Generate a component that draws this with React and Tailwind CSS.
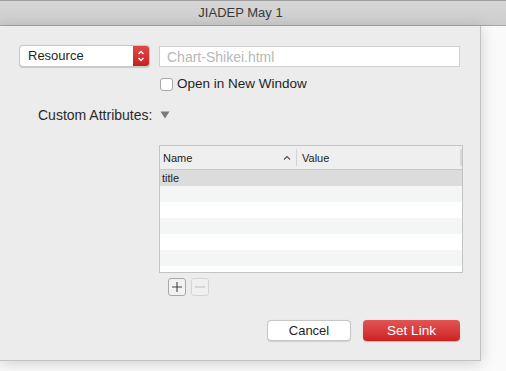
import React from "react";

export default function App() {
  const rows = [
    { bg: "bg-[#dcdcdc]", text: "title" },
    { bg: "bg-[#f4f5f5]" },
    { bg: "bg-white" },
    { bg: "bg-[#f4f5f5]" },
    { bg: "bg-white" },
    { bg: "bg-[#f4f5f5]" },
  ];
  return (
    <div
      className="w-[506px] h-[371px] bg-[#fafafa] overflow-hidden relative text-[13px] text-[#222]"
      style={{ fontFamily: '"Liberation Sans", Arial, sans-serif' }}
    >
      <div className="h-[26px] border-t border-[#9f9f9f] border-b border-b-[#a6a6a6] bg-gradient-to-b from-[#d6d6d6] to-[#cdcdcd] flex items-center">
        <div className="w-[481px] text-center text-[13px] leading-[16px] text-[#3a3a3a]">JIADEP May 1</div>
      </div>
      <div className="w-[481px] h-[335px] bg-[#ececec] border-r border-b border-[#c2c2c2] shadow-[0_2px_14px_rgba(0,0,0,0.18)] flex flex-col relative">
        <div className="flex items-start pl-[19px] pt-[19px]">
          <div className="w-[131px] h-[22px] rounded-[4px] bg-white border border-[#c8c8c8] flex items-center overflow-hidden shadow-[0_0.5px_1px_rgba(0,0,0,0.15)]">
            <span className="flex-1 pl-[8px] text-[13px] leading-[16px] text-[#1f1f1f]">Resource</span>
            <div className="w-[16px] h-full bg-gradient-to-b from-[#e04848] to-[#c51f1f] flex items-center justify-center">
              <svg width="8" height="14" viewBox="0 0 8 14">
                <path d="M1.5 5 L4 2.5 L6.5 5" stroke="white" strokeWidth="1.3" fill="none" />
                <path d="M1.5 9 L4 11.5 L6.5 9" stroke="white" strokeWidth="1.3" fill="none" />
              </svg>
            </div>
          </div>
          <div className="ml-[9px] mt-[1px] w-[301px] h-[21px] bg-white border border-[#d0d0d0] flex items-center pl-[7px] text-[#b8b8b8] text-[14px] leading-[16px]">
            Chart-Shikei.html
          </div>
        </div>
        <div className="flex items-center pl-[160px] mt-[10px] h-[14px]">
          <div className="w-[13px] h-[13px] rounded-[3px] bg-white border border-[#a8a8a8]" />
          <span className="ml-[4px] text-[13.5px] leading-[14px] text-[#1f1f1f]">Open in New Window</span>
        </div>
        <div className="flex items-center pl-[38px] mt-[16px] h-[16px]">
          <span className="text-[14px] leading-[16px] text-[#2a2a2a]">Custom Attributes:</span>
          <svg className="ml-[8px]" width="10" height="8" viewBox="0 0 10 8">
            <path d="M0.5 0.5 L9.5 0.5 L5 7.5 Z" fill="#7a7a7a" />
          </svg>
        </div>
        <div className="ml-[159px] mt-[22px] w-[304px] h-[128px] border border-[#c4c4c4] bg-white flex flex-col overflow-hidden">
          <div className="h-[24px] shrink-0 bg-[#efefef] border-b border-[#c8c8c8] flex items-center text-[11px] leading-[14px] text-[#222]">
            <div className="w-[137px] flex items-center pl-[3px] border-r border-[#d4d4d4] h-[17px]">
              <span className="flex-1">Name</span>
              <svg className="mr-[5px]" width="8" height="6" viewBox="0 0 8 6">
                <path d="M1 4.5 L4 1.5 L7 4.5" stroke="#555" strokeWidth="1.2" fill="none" />
              </svg>
            </div>
            <div className="flex-1 pl-[5px] h-[17px] flex items-center border-r-2 border-[#d8d8d8]">Value</div>
          </div>
          {rows.map((r, i) => (
            <div key={i} className={`h-[16px] shrink-0 ${r.bg} flex items-center pl-[2px] text-[11px] leading-[14px] text-[#222]`}>
              {r.text || ""}
            </div>
          ))}
        </div>
        <div className="flex ml-[168px] mt-[5px] gap-[5px]">
          <div className="w-[18px] h-[18px] rounded-[3px] border border-[#a8a8a8] bg-[#f2f2f2] flex items-center justify-center">
            <svg width="12" height="12" viewBox="0 0 12 12">
              <path d="M6 1 V11 M1 6 H11" stroke="#444" strokeWidth="1.1" />
            </svg>
          </div>
          <div className="w-[18px] h-[18px] rounded-[3px] border border-[#d4d4d4] bg-[#efefef] flex items-center justify-center">
            <svg width="12" height="12" viewBox="0 0 12 12">
              <path d="M1 6 H11" stroke="#c4c4c4" strokeWidth="1.1" />
            </svg>
          </div>
        </div>
        <div className="flex justify-end pr-[20px] mt-[24px] gap-[12px]">
          <div className="w-[84px] h-[21px] rounded-[4px] bg-white border border-[#c6c6c6] shadow-[0_0.5px_1px_rgba(0,0,0,0.12)] flex items-center justify-center text-[13px] leading-[16px] text-[#1f1f1f]">
            Cancel
          </div>
          <div className="w-[97px] h-[21px] rounded-[4px] bg-gradient-to-b from-[#e25454] to-[#cc2020] flex items-center justify-center text-[13.5px] leading-[16px] text-white shadow-[0_0.5px_1px_rgba(0,0,0,0.2)]">
            Set Link
          </div>
        </div>
      </div>
    </div>
  );
}
